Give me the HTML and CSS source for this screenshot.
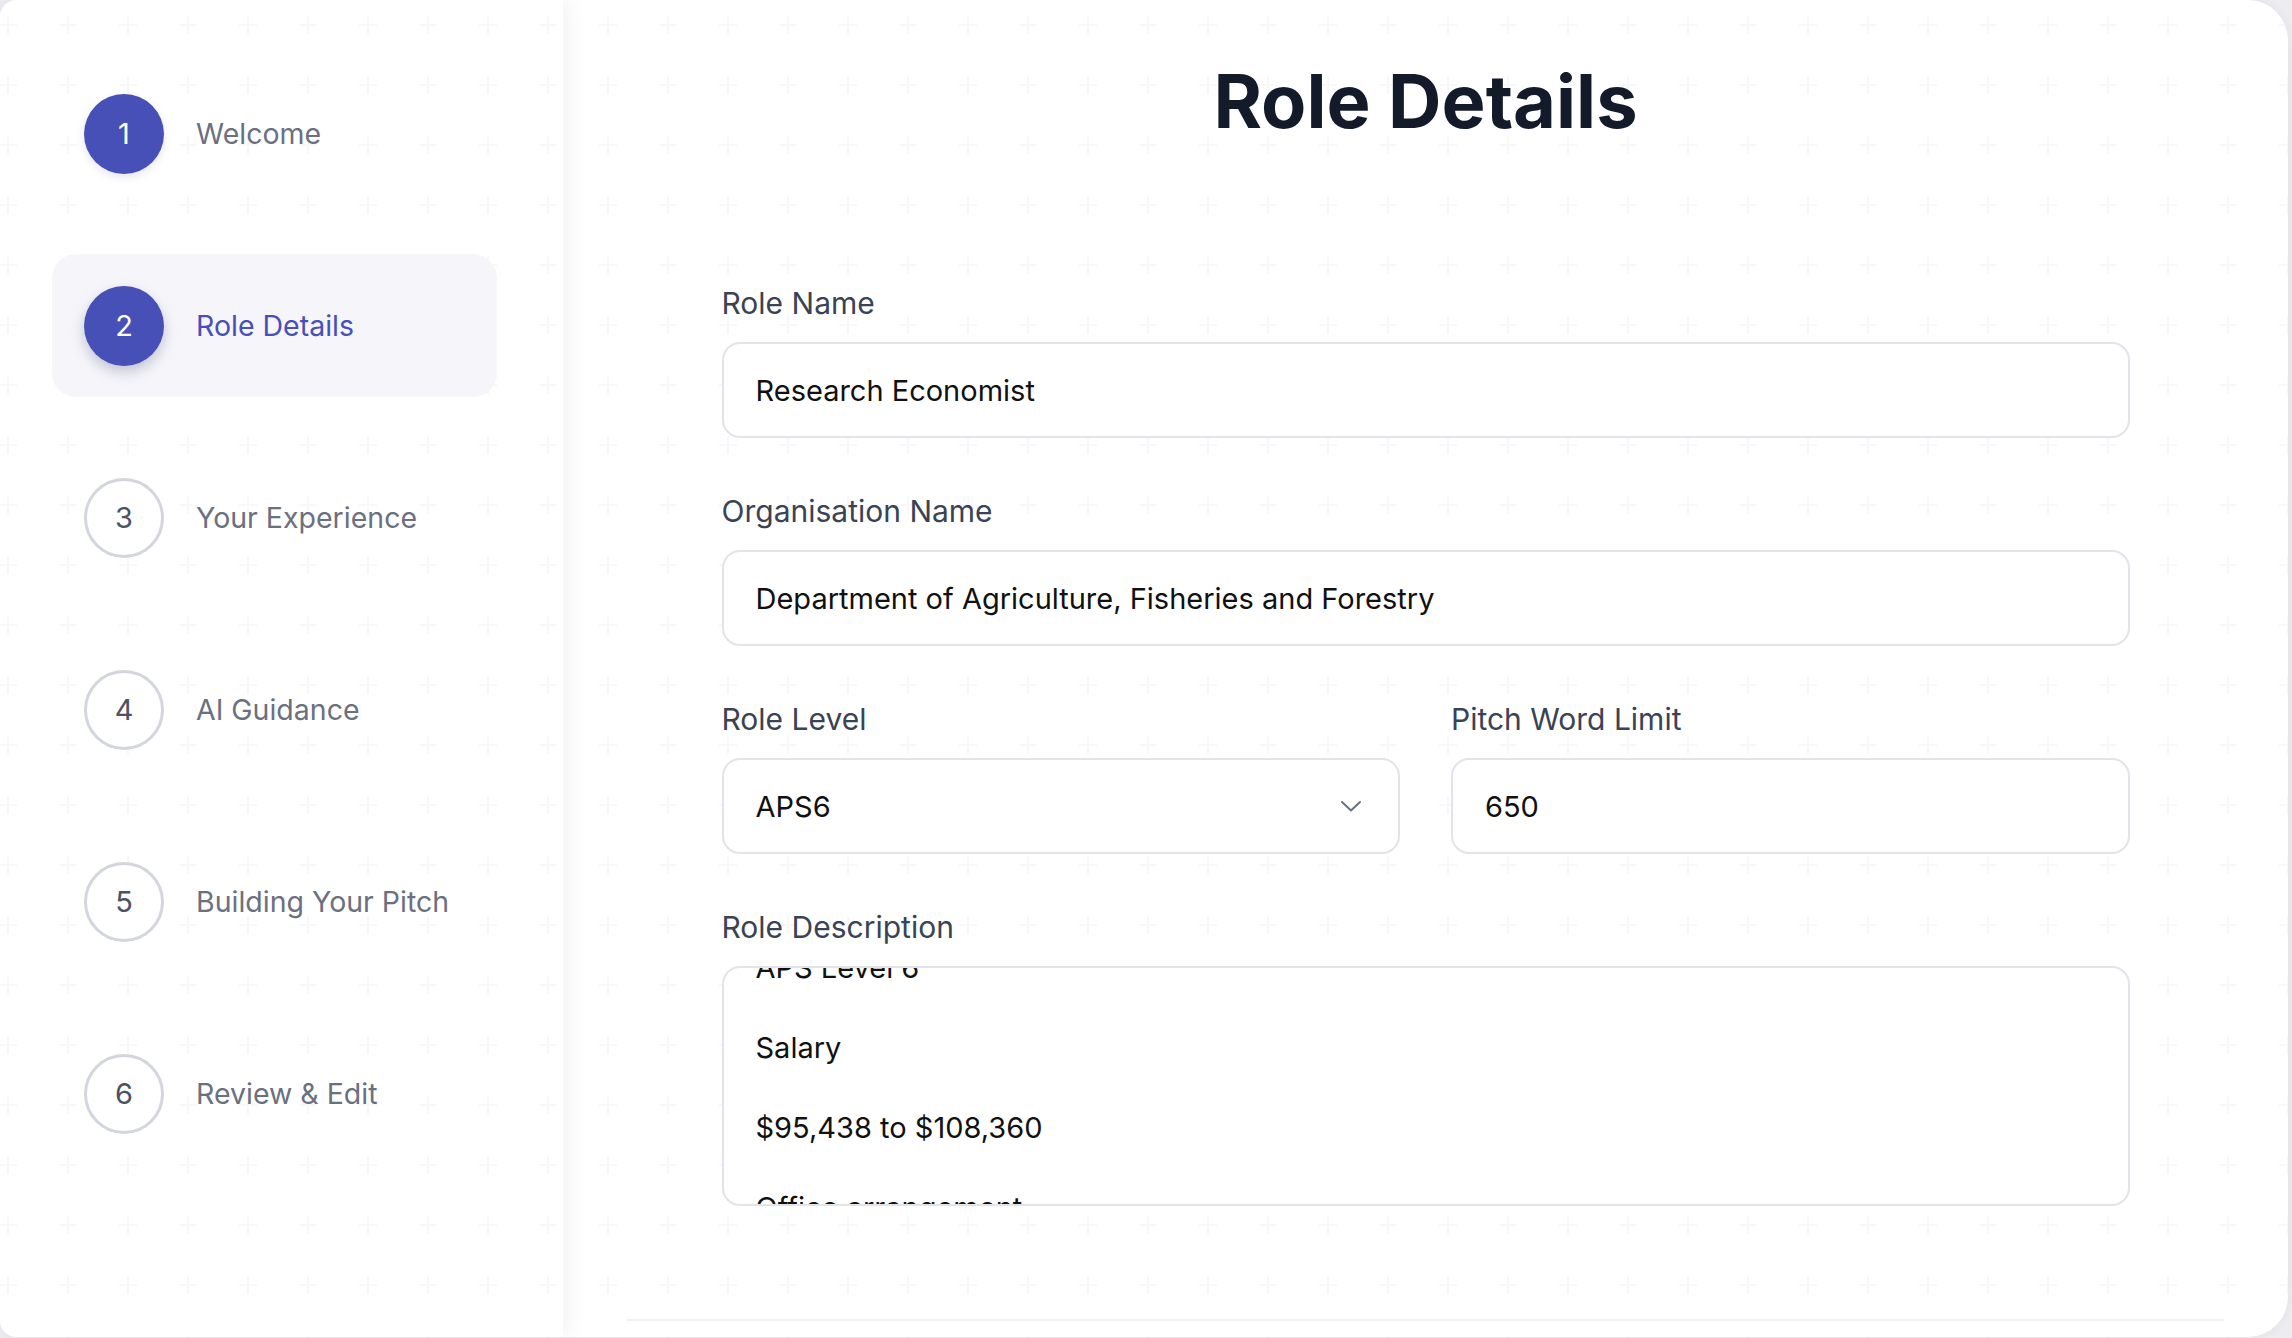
FILE: index.html
```html
<!DOCTYPE html>
<html lang="en">
<head>
<meta charset="utf-8">
<title>Role Details</title>
<link rel="stylesheet" href="styles.css">
</head>
<body>
<div class="app">
  <aside class="sidebar">
    <div class="step">
      <div class="circle done">1</div>
      <span class="step-label">Welcome</span>
    </div>
    <div class="step active">
      <div class="circle done current">2</div>
      <span class="step-label">Role Details</span>
    </div>
    <div class="step">
      <div class="circle todo">3</div>
      <span class="step-label">Your Experience</span>
    </div>
    <div class="step">
      <div class="circle todo">4</div>
      <span class="step-label">AI Guidance</span>
    </div>
    <div class="step">
      <div class="circle todo">5</div>
      <span class="step-label">Building Your Pitch</span>
    </div>
    <div class="step">
      <div class="circle todo">6</div>
      <span class="step-label">Review &amp; Edit</span>
    </div>
  </aside>
  <main class="main">
    <h1 class="title">Role Details</h1>
    <div class="form">
      <div class="field">
        <label class="field-label">Role Name</label>
        <div class="input">Research Economist</div>
      </div>
      <div class="field">
        <label class="field-label">Organisation Name</label>
        <div class="input">Department of Agriculture, Fisheries and Forestry</div>
      </div>
      <div class="row">
        <div class="field">
          <label class="field-label">Role Level</label>
          <div class="input select">
            <span>APS6</span>
            <svg class="chevron" width="22" height="12" viewBox="0 0 22 12"><path d="M2 2l9 8.5L20 2" fill="none" stroke="#6b7280" stroke-width="2" stroke-linecap="round" stroke-linejoin="round"/></svg>
          </div>
        </div>
        <div class="field">
          <label class="field-label">Pitch Word Limit</label>
          <div class="input">650</div>
        </div>
      </div>
      <div class="field">
        <label class="field-label">Role Description</label>
        <div class="textarea">
          <div class="textarea-content">
            <p>Classification</p>
            <p>APS Level 6</p>
            <p>Salary</p>
            <p>$95,438 to $108,360</p>
            <p>Office arrangement</p>
            <p>Flexible, hybrid working available</p>
          </div>
        </div>
      </div>
    </div>
    <div class="footer"></div>
  </main>
</div>
</body>
</html>
```
FILE: styles.css
```css
html, body {
  margin: 0;
  height: 100%;
  overflow: hidden;
}

body {
  background: #ededf1;
  font-family: Inter, "Noto Sans", sans-serif;
}

.app {
  width: 2288px;
  height: 1337px;
  display: flex;
  border-radius: 16px 40px 40px 16px;
  overflow: hidden;
  background-color: #ffffff;
  background-image: url("data:image/svg+xml,%3Csvg xmlns='http://www.w3.org/2000/svg' width='60' height='60'%3E%3Cpath d='M21 30h18M30 21v18' stroke='%23f8f8fa' stroke-width='2'/%3E%3C/svg%3E");
  background-size: 60px 60px;
  background-position: -22px -5px;
  box-shadow: 0 0 12px rgba(0, 0, 0, 0.06);
}

/* Sidebar */
.sidebar {
  width: 563px;
  flex: none;
  box-sizing: border-box;
  padding: 62px 66px 0 52px;
  display: flex;
  flex-direction: column;
  gap: 49px;
  position: relative;
  z-index: 1;
  box-shadow: 4px 0 22px rgba(0, 0, 0, 0.06);
}

.step {
  height: 143px;
  flex: none;
  display: flex;
  align-items: center;
  gap: 32px;
  padding-left: 32px;
  border-radius: 24px;
}

.step.active {
  background: rgba(244, 245, 249, 0.85);
}

.circle {
  width: 80px;
  height: 80px;
  flex: none;
  box-sizing: border-box;
  border-radius: 50%;
  display: flex;
  align-items: center;
  justify-content: center;
  font-size: 29px;
}

.circle.done {
  background: #4750b7;
  color: #ffffff;
  box-shadow: 0 3px 8px rgba(40, 44, 100, 0.12);
}

.circle.current {
  box-shadow: 0 6px 14px rgba(40, 44, 100, 0.25);
}

.circle.todo {
  background: #ffffff;
  border: 3px solid #d3d6dd;
  color: #4b5263;
}

.step-label {
  font-size: 28.5px;
  color: #6b7080;
}

.step.active .step-label {
  color: #4750b7;
}

/* Main */
.main {
  flex: 1;
  display: flex;
  flex-direction: column;
  align-items: center;
  padding-top: 58px;
  overflow: hidden;
}

.title {
  margin: 0 0 139px;
  font-size: 74px;
  line-height: 86px;
  font-weight: 700;
  color: #131a29;
}

.form {
  width: 1408px;
  display: flex;
  flex-direction: column;
  gap: 53px;
}

.field {
  display: flex;
  flex-direction: column;
  gap: 19px;
}

.field-label {
  font-size: 30px;
  line-height: 40px;
  color: #3a4355;
}

.input {
  height: 96px;
  box-sizing: border-box;
  border: 2px solid #e3e4e9;
  border-radius: 18px;
  background: #ffffff;
  padding: 0 36px 0 32px;
  display: flex;
  align-items: center;
  font-size: 29px;
  color: #111111;
}

.select {
  justify-content: space-between;
}

.chevron {
  flex: none;
}

.row {
  display: grid;
  grid-template-columns: 1fr 1fr;
  gap: 51px;
}

.textarea {
  height: 240px;
  box-sizing: border-box;
  border: 2px solid #e3e4e9;
  border-radius: 18px;
  background: #ffffff;
  overflow: hidden;
  font-size: 29px;
  color: #111111;
}

.textarea-content {
  margin-top: -100px;
  padding: 0 32px;
}

.textarea-content p {
  margin: 0 0 40px;
  line-height: 40px;
}

.footer {
  align-self: stretch;
  margin: 113px 64px 0;
  height: 80px;
  flex: none;
  border-top: 2px solid #eff0f2;
}
```
